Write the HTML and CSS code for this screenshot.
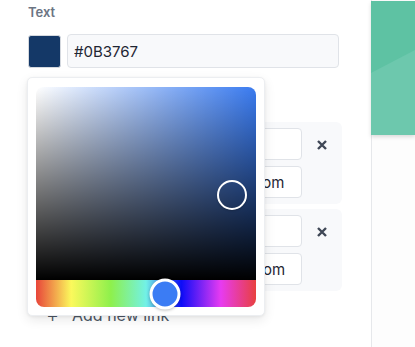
FILE: index.html
```html
<!DOCTYPE html>
<html lang="en">
<head>
    <meta charset="UTF-8">
    <title>Link page editor</title>
    <link rel="stylesheet" href="styles.css">
</head>
<body>
    <div class="app">
        <div class="editor">
            <div class="field">
                <div class="label">Text</div>
                <div class="color-row">
                    <span class="swatch"></span>
                    <input type="text" class="input hex" value="#0B3767">

                    <!-- color picker popover -->
                    <div class="picker">
                        <div class="saturation">
                            <span class="sat-pointer" style="left:89.1%; top:56%"></span>
                        </div>
                        <div class="hue">
                            <span class="hue-pointer" style="left:58.6%"></span>
                        </div>
                    </div>
                </div>
            </div>

            <div class="field links">
                <div class="label">Links</div>

                <div class="link-row">
                    <div class="icon-pick"></div>
                    <div class="link-inputs">
                        <input type="text" class="input" value="YouTube">
                        <input type="text" class="input" value="https://www.youtube.com">
                    </div>
                    <button class="remove" title="Remove">
                        <svg width="12" height="12" viewBox="0 0 12 12"><path d="M2 2L10 10M10 2L2 10"/></svg>
                    </button>
                </div>

                <div class="link-row">
                    <div class="icon-pick"></div>
                    <div class="link-inputs">
                        <input type="text" class="input" value="Dribbble">
                        <input type="text" class="input" value="https://www.dribbble.com">
                    </div>
                    <button class="remove" title="Remove">
                        <svg width="12" height="12" viewBox="0 0 12 12"><path d="M2 2L10 10M10 2L2 10"/></svg>
                    </button>
                </div>

                <button class="add-link"><span class="plus">+</span>Add new link</button>
            </div>
        </div>

        <div class="preview">
            <div class="card"></div>
        </div>
    </div>
</body>
</html>
```

FILE: styles.css
```css
* { box-sizing: border-box; }
html, body {
    margin: 0;
    height: 100%;
    overflow: hidden;
}
body {
    font-family: Inter, "Noto Sans", Arial, sans-serif;
    background: #fff;
    color: #1f2633;
}
.app {
    display: flex;
    height: 100%;
}
.editor {
    width: 371px;
    flex: none;
    padding: 4px 29px 0 28px;
}
.label {
    font-size: 13px;
    line-height: 16px;
    font-weight: 600;
    color: #6b7483;
}
.color-row {
    position: relative;
    display: flex;
    align-items: center;
    gap: 6px;
    margin-top: 14px;
    padding-right: 3px;
}
.swatch {
    width: 33px;
    height: 33px;
    margin-top: 1px;
    border-radius: 3px;
    background: #143867;
    border: 1px solid #d5d9df;
    flex: none;
}
.input {
    font-family: inherit;
    font-size: 15px;
    color: #1f2633;
    height: 32px;
    padding: 0 11px;
    border: 1px solid #e0e3e8;
    border-radius: 4px;
    background: #fff;
    outline: none;
    width: 100%;
}
.hex {
    height: 34px;
    padding: 0 6px;
    background: #f8f9fb;
    border-width: 1.5px;
    flex: 1;
}

/* picker */
.picker {
    position: absolute;
    left: -1px;
    top: 43px;
    width: 238px;
    padding: 9px 8px 8px 8px;
    background: #fff;
    border: 1px solid #eceef1;
    border-radius: 5px;
    box-shadow: 0 4px 12px rgba(0,0,0,0.09), 0 1px 3px rgba(0,0,0,0.06);
    z-index: 5;
}
.saturation {
    position: relative;
    height: 193px;
    border-radius: 8px 8px 0 0;
    background:
        linear-gradient(to top, #000, rgba(0,0,0,0)),
        linear-gradient(to right, #fff, rgba(255,255,255,0)),
        #3a7bf0;
}
.sat-pointer {
    position: absolute;
    width: 30px;
    height: 30px;
    border: 2px solid #fff;
    border-radius: 50%;
    transform: translate(-50%, -50%);
    box-shadow: 0 1px 2px rgba(0,0,0,0.2);
}
.hue {
    position: relative;
    height: 27px;
    border-radius: 0 0 8px 8px;
    background: linear-gradient(to right,
        #e8453a 0%, #fbf95c 16%, #8ef04c 34%, #72f1e6 50%,
        #0c0cf8 66%, #e73bf1 84%, #e8403f 100%);
}
.hue-pointer {
    position: absolute;
    top: 50%;
    width: 31px;
    height: 31px;
    border: 3px solid #fff;
    border-radius: 50%;
    background: #3b7cf4;
    transform: translate(-50%, -50%);
    box-shadow: 0 1px 3px rgba(0,0,0,0.25);
}

/* links */
.links { margin-top: 20px; }
.links .label { margin-bottom: 18px; }
.link-row {
    display: flex;
    align-items: center;
    padding: 6px 0 6px 8px;
    margin-bottom: 5px;
    background: #f8f9fb;
    border-radius: 6px;
}
.icon-pick {
    width: 45px;
    height: 70px;
    margin-right: 8px;
    flex: none;
    border-radius: 4px;
    background: #fff;
    border: 1px solid #e0e3e8;
}
.link-inputs {
    flex: 1;
    display: flex;
    flex-direction: column;
    gap: 6px;
}
.remove {
    width: 40px;
    flex: none;
    border: none;
    background: none;
    padding: 0;
    display: flex;
    justify-content: center;
    align-self: flex-start;
    margin-top: 11px;
    cursor: pointer;
}
.remove path {
    stroke: #3f4756;
    stroke-width: 2.4;
    fill: none;
}
.add-link {
    margin-top: 12px;
    border: none;
    background: none;
    font-family: inherit;
    font-size: 16px;
    line-height: 24px;
    color: #4b5563;
    padding: 0 0 0 18px;
    display: flex;
    align-items: center;
    cursor: pointer;
}
.plus {
    width: 12px;
    margin-right: 14px;
    font-size: 20px;
    font-weight: 300;
}

/* preview */
.preview {
    flex: 1;
    border-left: 1px solid #e6e8eb;
    background: #fdfdfd;
}
.card {
    position: relative;
    margin: 1px 0 0 -1px;
    height: 134px;
    background: #5ec2a3;
    box-shadow: 0 2px 4px rgba(0,0,0,0.14);
    overflow: hidden;
}
.card::after {
    content: "";
    position: absolute;
    inset: 0;
    background: #6dc8ad;
    clip-path: polygon(0 72px, 100% 49px, 100% 100%, 0 100%);
}
```
